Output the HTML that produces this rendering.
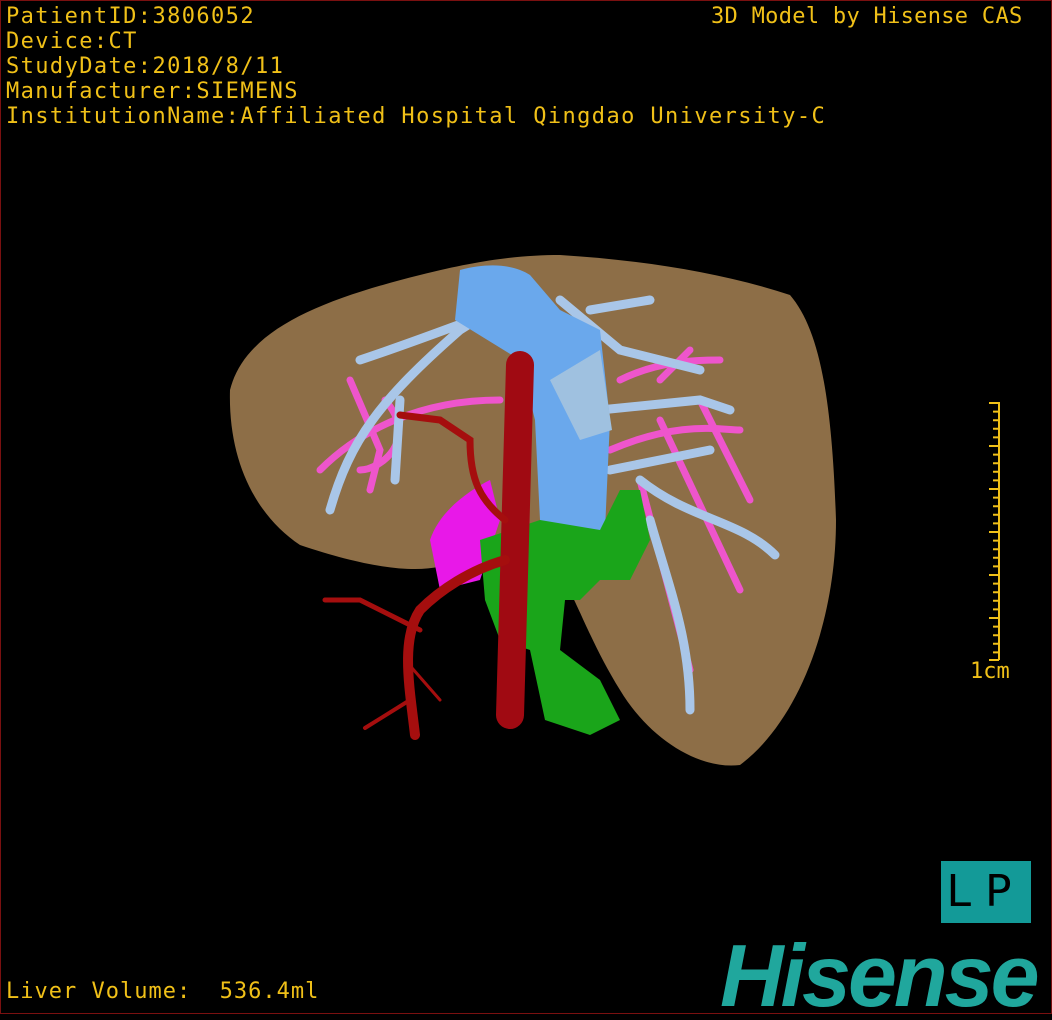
<!DOCTYPE html>
<html><head><meta charset="utf-8"><style>
html,body{margin:0;padding:0;background:#000;}
.wrap{position:relative;width:1052px;height:1020px;background:#000;overflow:hidden;}
.frame{position:absolute;left:0;top:0;width:1050px;height:1012px;border:1px solid #7a1010;}
.t{position:absolute;color:#f0c018;font-family:"DejaVu Sans Mono","Liberation Mono",monospace;font-size:22px;line-height:25px;white-space:pre;letter-spacing:1.4px;}
.lp{position:absolute;left:941px;top:861px;width:90px;height:62px;background:#139a98;color:#000;font-family:"DejaVu Sans",sans-serif;font-size:44px;line-height:62px;text-align:center;letter-spacing:14px;}
.hs{position:absolute;left:720px;top:932px;color:#20a79d;font-family:"Liberation Sans",sans-serif;font-weight:bold;font-style:italic;font-size:88px;line-height:88px;letter-spacing:-3px;}
</style></head><body><div class="wrap">
<svg width="1052" height="1020" style="position:absolute;left:0;top:0">
<path d="M230,390 C245,330 320,300 420,275 C480,260 520,255 560,255 C640,260 720,272 790,295 C820,330 832,400 836,520 C836,620 800,720 740,765 C700,770 650,740 620,690 C595,650 580,610 570,592 C545,575 500,555 460,560 C430,575 380,572 300,545 C255,515 228,460 230,390Z" fill="#8d6e47"/>
<g fill="none" stroke-linecap="round">
<g stroke="#ee55cc" stroke-width="7">
<path d="M320,470 C360,430 420,400 500,400"/><path d="M350,380 L380,450 L370,490"/><path d="M385,400 C420,440 380,470 360,470"/>
<path d="M620,380 C660,360 700,360 720,360"/><path d="M610,450 C680,420 720,430 740,430"/>
<path d="M640,480 L690,670"/><path d="M660,420 L740,590"/><path d="M700,400 L750,500"/><path d="M690,350 L660,380"/>
</g>
<g stroke="#a9c6e8" stroke-width="9">
<path d="M330,510 C350,440 380,400 460,330 C490,310 520,300 545,300"/>
<path d="M360,360 C420,340 470,320 500,310"/><path d="M395,480 L400,400"/>
<path d="M560,300 L620,350 L700,370"/><path d="M590,310 L650,300"/>
<path d="M600,410 L700,400 L730,410"/>
<path d="M610,470 L710,450"/>
<path d="M640,480 C690,520 740,520 775,555"/>
<path d="M650,520 C670,590 690,640 690,710"/>
</g>
</g>
<path d="M460,270 C490,262 515,265 530,275 L560,310 L600,330 L610,420 L605,530 L570,540 L540,520 L535,420 L520,360 L455,320Z" fill="#6aa8ec"/>
<path d="M550,380 L600,350 L612,430 L580,440Z" fill="#9fc1e0"/>
<path d="M430,540 C440,510 470,490 490,480 L500,520 L480,580 L440,590Z" fill="#e818e8"/>
<path d="M480,540 L540,520 L600,530 L620,490 L640,490 L650,540 L630,580 L600,580 L580,600 L565,600 L560,650 L600,680 L620,720 L590,735 L545,720 L530,650 L500,640 L485,600Z" fill="#1aa51a"/>
<g fill="none" stroke="#a50e0e" stroke-linecap="round">
<path d="M520,365 L510,715" stroke-width="28" stroke="#a00a12"/>
<path d="M505,560 C470,570 440,590 420,610 C400,640 410,690 415,735" stroke-width="10"/>
<path d="M505,520 C480,500 470,480 470,440 L440,420 L400,415" stroke-width="7"/>
<path d="M420,630 L360,600 L325,600" stroke-width="5"/><path d="M410,700 L365,728" stroke-width="4"/><path d="M405,660 L440,700" stroke-width="3"/>
</g>
<g stroke="#f0c018" stroke-width="2">
<line x1="999" y1="402" x2="999" y2="660"/>
<path d="M989,403H999M993,411.6H999M993,420.2H999M993,428.8H999M993,437.4H999M989,446H999M993,454.6H999M993,463.2H999M993,471.8H999M993,480.4H999M989,489H999M993,497.6H999M993,506.2H999M993,514.8H999M993,523.4H999M989,532H999M993,540.6H999M993,549.2H999M993,557.8H999M993,566.4H999M989,575H999M993,583.6H999M993,592.2H999M993,600.8H999M993,609.4H999M989,618H999M993,626.6H999M993,635.2H999M993,643.8H999M993,652.4H999M989,660H999"/>
</g>
</svg>
<div class="frame"></div>
<div class="t" style="left:6px;top:4px">PatientID:3806052
Device:CT
StudyDate:2018/8/11
Manufacturer:SIEMENS
InstitutionName:Affiliated Hospital Qingdao University-C</div>
<div class="t" style="left:711px;top:4px;letter-spacing:0.3px">3D Model by Hisense CAS</div>
<div class="t" style="left:970px;top:659px;letter-spacing:0">1cm</div>
<div class="t" style="left:6px;top:979px;letter-spacing:1px">Liver Volume:  536.4ml</div>
<div class="lp">LP</div>
<div class="hs">Hisense</div>
</div></body></html>
